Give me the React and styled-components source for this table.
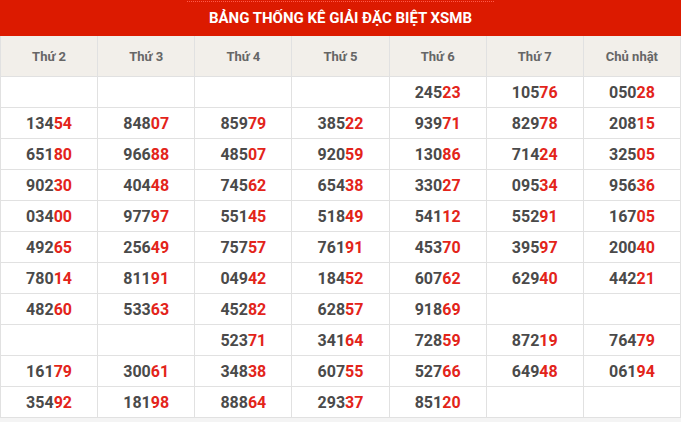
import React from 'react'
import styled, { createGlobalStyle } from 'styled-components'

const GlobalStyle = createGlobalStyle`
  html, body {
    margin: 0;
    padding: 0;
    background: #f4f4f4;
    font-family: Roboto, "Liberation Sans", Arial, sans-serif;
  }
`

const days = ['Thứ 2', 'Thứ 3', 'Thứ 4', 'Thứ 5', 'Thứ 6', 'Thứ 7', 'Chủ nhật']

const rows = [
  ['', '', '', '', '24523', '10576', '05028'],
  ['13454', '84807', '85979', '38522', '93971', '82978', '20815'],
  ['65180', '96688', '48507', '92059', '13086', '71424', '32505'],
  ['90230', '40448', '74562', '65438', '33027', '09534', '95636'],
  ['03400', '97797', '55145', '51849', '54112', '55291', '16705'],
  ['49265', '25649', '75757', '76191', '45370', '39597', '20040'],
  ['78014', '81191', '04942', '18452', '60762', '62940', '44221'],
  ['48260', '53363', '45282', '62857', '91869', '', ''],
  ['', '', '52371', '34164', '72859', '87219', '76479'],
  ['16179', '30061', '34838', '60755', '52766', '64948', '06194'],
  ['35492', '18198', '88864', '29337', '85120', '', '']
]

const Number = ({ value }) => {
  if (!value) return null
  return (
    <>
      {value.slice(0, 3)}
      <Tail>{value.slice(3)}</Tail>
    </>
  )
}

const App = () => (
  <>
    <GlobalStyle />
    <Wrapper>
      <Title>
        <TitleText>BẢNG THỐNG KÊ GIẢI ĐẶC BIỆT XSMB</TitleText>
      </Title>
      <Table>
        <thead>
          <tr>
            {days.map(day => <Head key={day}>{day}</Head>)}
          </tr>
        </thead>
        <tbody>
          {rows.map((row, i) =>
            <tr key={i}>
              {row.map((value, j) =>
                <Cell key={j}><Number value={value} /></Cell>
              )}
            </tr>
          )}
        </tbody>
      </Table>
    </Wrapper>
  </>
)

const Wrapper = styled.div`
  width: 681px;
  background: #fff;
`

const Title = styled.div`
  height: 36px;
  background: #dc1a00;
  display: flex;
  align-items: center;
  justify-content: center;
`

const TitleText = styled.span`
  position: relative;
  color: #fff;
  font-size: 15px;
  font-weight: 700;
  line-height: 36px;
  padding: 0 22px;

  &::before {
    content: '';
    position: absolute;
    top: 1px;
    left: 0;
    right: 0;
    border-top: 1px dotted #ff5a4a;
  }
`

const Table = styled.table`
  width: 100%;
  border-collapse: collapse;
  table-layout: fixed;
`

const Head = styled.th`
  height: 40px;
  padding: 0;
  background: #f2efea;
  color: #666;
  font-size: 13px;
  font-weight: 700;
  text-align: center;
  border: 1px solid #e1e1e1;
  border-top: none;
`

const Cell = styled.td`
  height: 30px;
  padding: 0;
  text-align: center;
  color: #4a4a4a;
  font-size: 16px;
  font-weight: 700;
  border: 1px solid #e1e1e1;
`

const Tail = styled.span`
  color: #e3241a;
`

export default App
